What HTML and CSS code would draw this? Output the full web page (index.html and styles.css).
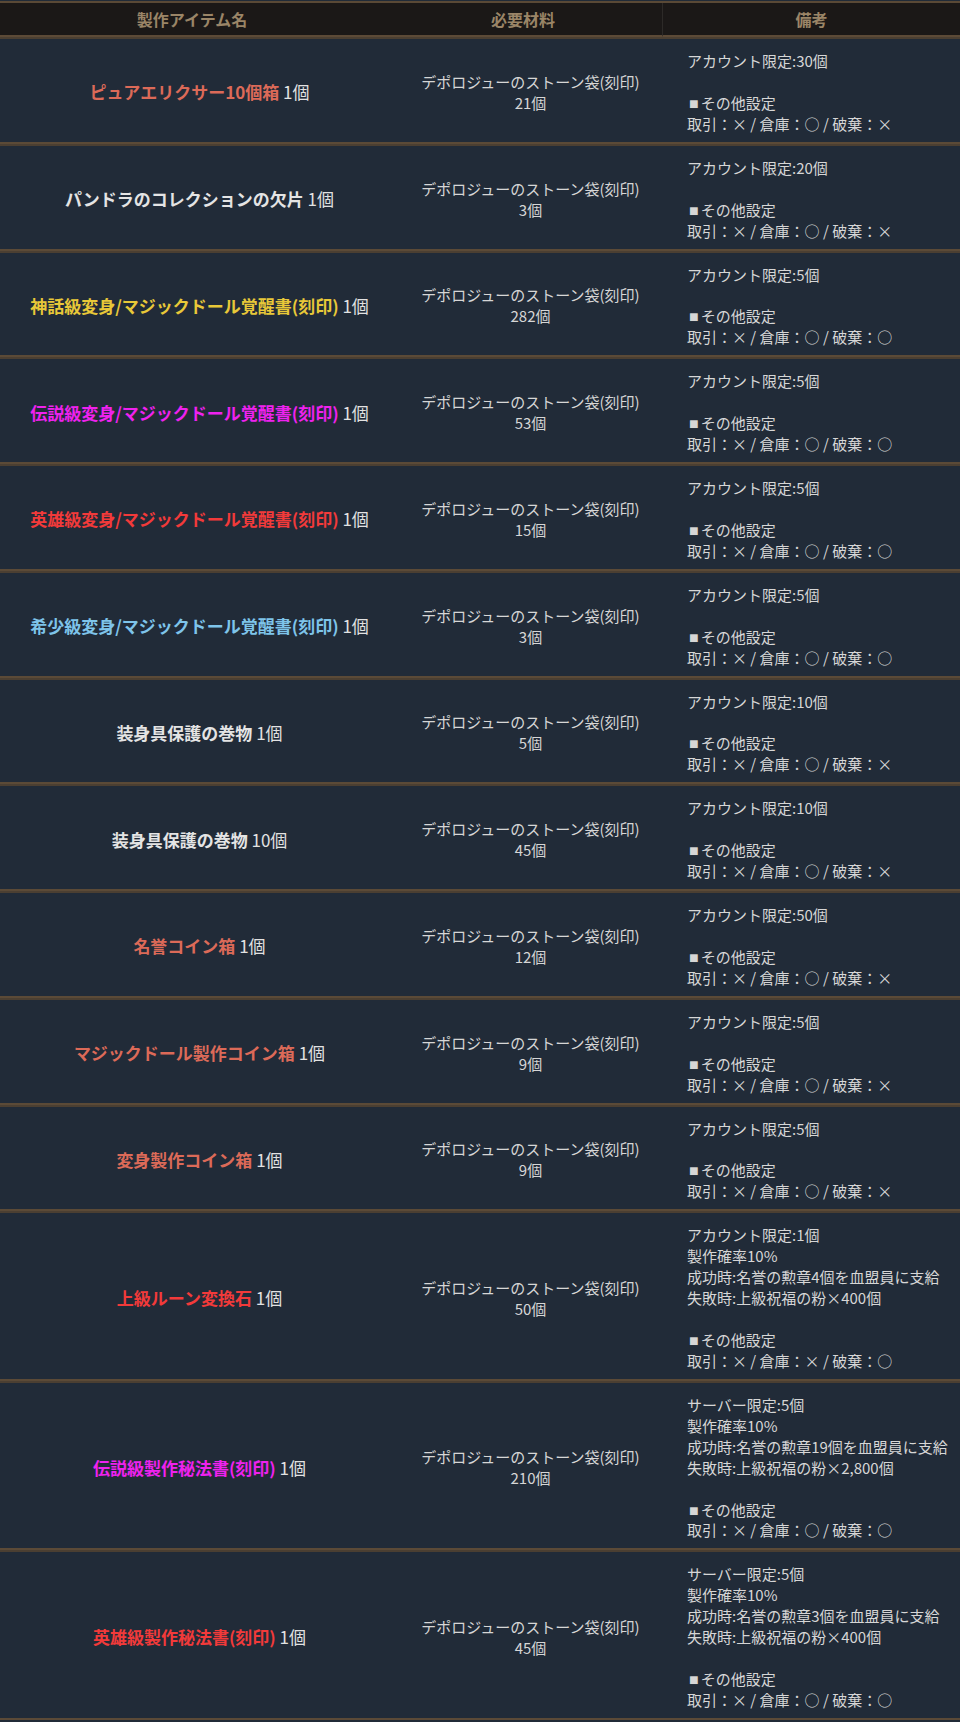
FILE: index.html
```html
<!DOCTYPE html>
<html lang="ja">
<head>
<meta charset="utf-8">
<title>製作アイテム</title>
<link rel="stylesheet" href="styles.css">
</head>
<body>
<table class="craft">
  <colgroup>
    <col class="c-name">
    <col class="c-mat">
    <col class="c-note">
  </colgroup>
  <thead>
    <tr>
      <th>製作アイテム名</th>
      <th>必要材料</th>
      <th class="th-note">備考</th>
    </tr>
  </thead>
  <tbody>
    <tr>
      <td class="name"><b class="salmon">ピュアエリクサー10個箱</b> 1個</td>
      <td class="mat">デポロジューのストーン袋(刻印)<br>21個</td>
      <td class="note">アカウント限定:30個<br><br><span class="sq">■</span>その他設定<br>取引：× / 倉庫：○ / 破棄：×</td>
    </tr>
    <tr>
      <td class="name"><b class="white">パンドラのコレクションの欠片</b> 1個</td>
      <td class="mat">デポロジューのストーン袋(刻印)<br>3個</td>
      <td class="note">アカウント限定:20個<br><br><span class="sq">■</span>その他設定<br>取引：× / 倉庫：○ / 破棄：×</td>
    </tr>
    <tr>
      <td class="name"><b class="yellow">神話級変身/マジックドール覚醒書(刻印)</b> 1個</td>
      <td class="mat">デポロジューのストーン袋(刻印)<br>282個</td>
      <td class="note">アカウント限定:5個<br><br><span class="sq">■</span>その他設定<br>取引：× / 倉庫：○ / 破棄：○</td>
    </tr>
    <tr>
      <td class="name"><b class="magenta">伝説級変身/マジックドール覚醒書(刻印)</b> 1個</td>
      <td class="mat">デポロジューのストーン袋(刻印)<br>53個</td>
      <td class="note">アカウント限定:5個<br><br><span class="sq">■</span>その他設定<br>取引：× / 倉庫：○ / 破棄：○</td>
    </tr>
    <tr>
      <td class="name"><b class="red">英雄級変身/マジックドール覚醒書(刻印)</b> 1個</td>
      <td class="mat">デポロジューのストーン袋(刻印)<br>15個</td>
      <td class="note">アカウント限定:5個<br><br><span class="sq">■</span>その他設定<br>取引：× / 倉庫：○ / 破棄：○</td>
    </tr>
    <tr>
      <td class="name"><b class="blue">希少級変身/マジックドール覚醒書(刻印)</b> 1個</td>
      <td class="mat">デポロジューのストーン袋(刻印)<br>3個</td>
      <td class="note">アカウント限定:5個<br><br><span class="sq">■</span>その他設定<br>取引：× / 倉庫：○ / 破棄：○</td>
    </tr>
    <tr>
      <td class="name"><b class="white">装身具保護の巻物</b> 1個</td>
      <td class="mat">デポロジューのストーン袋(刻印)<br>5個</td>
      <td class="note">アカウント限定:10個<br><br><span class="sq">■</span>その他設定<br>取引：× / 倉庫：○ / 破棄：×</td>
    </tr>
    <tr>
      <td class="name"><b class="white">装身具保護の巻物</b> 10個</td>
      <td class="mat">デポロジューのストーン袋(刻印)<br>45個</td>
      <td class="note">アカウント限定:10個<br><br><span class="sq">■</span>その他設定<br>取引：× / 倉庫：○ / 破棄：×</td>
    </tr>
    <tr>
      <td class="name"><b class="salmon">名誉コイン箱</b> 1個</td>
      <td class="mat">デポロジューのストーン袋(刻印)<br>12個</td>
      <td class="note">アカウント限定:50個<br><br><span class="sq">■</span>その他設定<br>取引：× / 倉庫：○ / 破棄：×</td>
    </tr>
    <tr>
      <td class="name"><b class="salmon">マジックドール製作コイン箱</b> 1個</td>
      <td class="mat">デポロジューのストーン袋(刻印)<br>9個</td>
      <td class="note">アカウント限定:5個<br><br><span class="sq">■</span>その他設定<br>取引：× / 倉庫：○ / 破棄：×</td>
    </tr>
    <tr>
      <td class="name"><b class="salmon">変身製作コイン箱</b> 1個</td>
      <td class="mat">デポロジューのストーン袋(刻印)<br>9個</td>
      <td class="note">アカウント限定:5個<br><br><span class="sq">■</span>その他設定<br>取引：× / 倉庫：○ / 破棄：×</td>
    </tr>
    <tr>
      <td class="name"><b class="red">上級ルーン変換石</b> 1個</td>
      <td class="mat">デポロジューのストーン袋(刻印)<br>50個</td>
      <td class="note">アカウント限定:1個<br>製作確率10%<br>成功時:名誉の勲章4個を血盟員に支給<br>失敗時:上級祝福の粉×400個<br><br><span class="sq">■</span>その他設定<br>取引：× / 倉庫：× / 破棄：○</td>
    </tr>
    <tr>
      <td class="name"><b class="magenta">伝説級製作秘法書(刻印)</b> 1個</td>
      <td class="mat">デポロジューのストーン袋(刻印)<br>210個</td>
      <td class="note">サーバー限定:5個<br>製作確率10%<br>成功時:名誉の勲章19個を血盟員に支給<br>失敗時:上級祝福の粉×2,800個<br><br><span class="sq">■</span>その他設定<br>取引：× / 倉庫：○ / 破棄：○</td>
    </tr>
    <tr>
      <td class="name"><b class="red">英雄級製作秘法書(刻印)</b> 1個</td>
      <td class="mat">デポロジューのストーン袋(刻印)<br>45個</td>
      <td class="note">サーバー限定:5個<br>製作確率10%<br>成功時:名誉の勲章3個を血盟員に支給<br>失敗時:上級祝福の粉×400個<br><br><span class="sq">■</span>その他設定<br>取引：× / 倉庫：○ / 破棄：○</td>
    </tr>
  </tbody>
</table>
</body>
</html>
```

FILE: styles.css
```css
html, body {
  margin: 0;
  padding: 0;
  background: #212b38;
}

body {
  padding-top: 1px;
  font-family: "Noto Sans CJK JP", "Noto Sans", sans-serif;
  color: #d6d6d6;
}

.craft {
  width: 960px;
  border-collapse: separate;
  border-spacing: 0;
  table-layout: fixed;
  border-top: 2px solid #5a4936;
}

.c-name { width: 384px; }
.c-mat { width: 278px; }
.c-note { width: 298px; }

.craft th {
  height: 32px;
  padding: 0;
  background: #1b1817;
  color: #9a8567;
  font-size: 16px;
  font-weight: bold;
  line-height: 32px;
  text-align: center;
  border-bottom: 2px solid #5c4a37;
}

.craft .th-note {
  border-left: 1px solid #2d2a28;
}

.craft td {
  background: #212b38;
  border-top: 2px solid #4b3f32;
  border-bottom: 2px solid #5b4a37;
  padding: 12px 9px 7px 24px;
  line-height: 20.93px;
  vertical-align: middle;
}

.craft .name {
  text-align: center;
  font-size: 17px;
  color: #e2e2e2;
}

.craft .name b {
  font-weight: bold;
}

.craft .mat {
  text-align: center;
  font-size: 15px;
}

.craft .note {
  text-align: left;
  font-size: 15px;
  padding-left: 25px;
  vertical-align: top;
}

.sq {
  font-family: "Liberation Sans", "DejaVu Sans", sans-serif;
  font-size: 16px;
  line-height: 0;
  margin-left: 2px;
  margin-right: 2px;
}

.salmon { color: #dc6a58; }
.white { color: #e4e4e4; }
.yellow { color: #e8c838; }
.magenta { color: #ee22ee; }
.red { color: #f23a3a; }
.blue { color: #7ec4ea; }
```
